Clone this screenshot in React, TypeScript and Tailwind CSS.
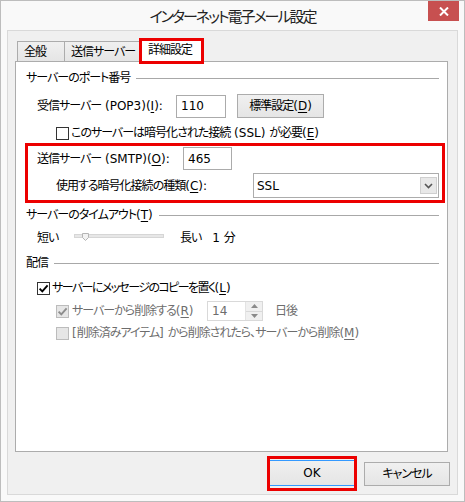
import React from "react";

const CJK = /([\u3000-\u30ff\u3400-\u9fff\uff00-\uffef]+)/;

function J({ children, tight }: { children: string; tight?: boolean }) {
  const parts = children.split(CJK);
  return (
    <>
      {parts.map((p, i) =>
        p && CJK.test(p) ? (
          <span key={i} className={tight ? "tracking-[-1.6px]" : "tracking-[-1px]"}>
            {p}
          </span>
        ) : (
          <React.Fragment key={i}>{p}</React.Fragment>
        )
      )}
    </>
  );
}

function Check({ checked, disabled }: { checked?: boolean; disabled?: boolean }) {
  return (
    <div
      className={
        disabled
          ? "w-[13px] h-[13px] border border-[#bcbcbc] bg-[#e6e6e6] flex items-center justify-center shrink-0"
          : "w-[13px] h-[13px] border border-[#333333] bg-white flex items-center justify-center shrink-0"
      }
    >
      {checked && (
        <svg width="11" height="11" viewBox="0 0 11 11">
          <path
            d="M1.6 5.6 L4.3 8.3 L9.6 2.4"
            fill="none"
            stroke={disabled ? "#8d8d8d" : "#000000"}
            strokeWidth="1.9"
          />
        </svg>
      )}
    </div>
  );
}

function Group({ children }: { children: React.ReactNode }) {
  return (
    <div className="flex items-center h-[16px]">
      <span className="whitespace-nowrap">{children}</span>
      <div className="flex-1 h-px bg-[#a8a8a8] ml-[6px]" />
    </div>
  );
}

function U({ children }: { children: string }) {
  return <u className="underline-offset-2">{children}</u>;
}

export default function App() {
  return (
    <div className="w-[465px] h-[502px] bg-[#f9f9f9] border border-[#bdbdbd] flex flex-col text-[12px] leading-[16px] text-black font-['DejaVu_Sans','Noto_Sans_CJK_JP',sans-serif] [font-feature-settings:'palt']">
      {/* title bar */}
      <div className="h-[29px] grid grid-cols-[1fr_auto_1fr] items-start">
        <div />
        <div className="text-[15px] leading-[20px] mt-[6px] text-[#222222] whitespace-nowrap tracking-[-2px]">
          インターネット電子メール設定
        </div>
        <div className="flex justify-end pr-[5px]">
          <div className="w-[31px] h-[20px] bg-[#c75050] flex items-center justify-center">
            <svg width="10" height="9" viewBox="0 0 10 9">
              <path d="M1 0.5 L9 8.5 M9 0.5 L1 8.5" stroke="#ffffff" strokeWidth="2" fill="none" />
            </svg>
          </div>
        </div>
      </div>

      {/* client */}
      <div className="mx-[6px] mb-[6px] flex-1 border border-[#d9d9d9] bg-[#f0f0f0] flex flex-col pl-[7px] pt-[8px]">
        {/* tabs */}
        <div className="flex items-end ml-[2px] h-[22px]">
          <div className="w-[48px] h-[20px] border-l border-t border-r border-[#acacac] bg-linear-to-b from-[#f0f0f0] to-[#e5e5e5] pl-[6px] flex items-center">
            <J>全般</J>
          </div>
          <div className="w-[75px] h-[20px] border-t border-r border-[#acacac] bg-linear-to-b from-[#f0f0f0] to-[#e5e5e5] pl-[6px] flex items-center whitespace-nowrap">
            <J>送信サーバー</J>
          </div>
          <div className="relative z-10 -ml-[1px] -mb-[3px] w-[65px] h-[26px] border-[3px] border-[#ec0000] bg-white pl-[6px] pb-[3px] flex items-center whitespace-nowrap">
            <J>詳細設定</J>
          </div>
        </div>

        {/* panel */}
        <div className="mr-[9px] h-[391px] border border-[#acacac] bg-white pl-[10px] pr-[8px] pt-[8px] flex flex-col">
          <Group>
            <J>サーバーのポート番号</J>
          </Group>

          <div className="mt-[8px] h-[24px] flex items-center pl-[11px]">
            <div className="w-[139px] whitespace-nowrap">
              <J>受信サーバー (POP3)(</J>
              <U>I</U>):
            </div>
            <div className="w-[50px] h-[23px] border border-[#ababab] bg-white pl-[4px] flex items-center">110</div>
            <div className="ml-[11px] w-[87px] h-[24px] border border-[#acacac] bg-linear-to-b from-[#f0f0f0] to-[#e5e5e5] flex items-center justify-center whitespace-nowrap">
              <J>標準設定(</J>
              <U>D</U>)
            </div>
          </div>

          <div className="mt-[7px] h-[16px] flex items-center pl-[30px]">
            <Check />
            <span className="ml-[2px] whitespace-nowrap">
              <J>このサーバーは暗号化された接続 (SSL) が必要(</J>
              <U>E</U>)
            </span>
          </div>

          <div className="mt-[2px] -ml-[1px] w-[420px] h-[60px] border-[3px] border-[#ec0000] flex flex-col">
            <div className="mt-[1px] h-[23px] flex items-center pl-[9px]">
              <div className="w-[146px] whitespace-nowrap">
                <J>送信サーバー (SMTP)(</J>
                <U>O</U>):
              </div>
              <div className="w-[49px] h-[23px] border border-[#ababab] bg-white pl-[4px] flex items-center">465</div>
            </div>
            <div className="mt-[3px] h-[25px] flex items-center pl-[28px]">
              <div className="w-[197px] whitespace-nowrap">
                <J>使用する暗号化接続の種類(</J>
                <U>C</U>):
              </div>
              <div className="w-[186px] h-[25px] border border-[#acacac] bg-white pl-[3px] flex items-center justify-between">
                <span>SSL</span>
                <div className="w-[17px] h-[17px] mr-[1px] border border-[#cfcfcf] bg-[#e8e8e8] flex items-center justify-center">
                  <svg width="9" height="6" viewBox="0 0 9 6">
                    <path d="M1 1 L4.5 4.5 L8 1" fill="none" stroke="#555555" strokeWidth="1.6" />
                  </svg>
                </div>
              </div>
            </div>
          </div>

          <div className="mt-[4px]">
            <Group>
              <J>サーバーのタイムアウト(</J>
              <U>T</U>)
            </Group>
          </div>

          <div className="mt-[7px] h-[16px] flex items-center pl-[11px]">
            <div className="w-[37px] whitespace-nowrap">
              <J>短い</J>
            </div>
            <div className="h-[16px] pt-[4px]">
              <div className="relative w-[90px] h-[4px] border border-[#d6d6d6] bg-[#e7e7e7]">
                <svg className="absolute left-[7px] -top-[2px]" width="7" height="8" viewBox="0 0 7 8">
                  <path d="M0.5 0.5 H6.5 V4.5 L3.5 7.5 L0.5 4.5 Z" fill="#f2f2f2" stroke="#b5b5b5" />
                </svg>
              </div>
            </div>
            <div className="ml-[16px] whitespace-nowrap">
              <J>長い</J>
            </div>
            <div className="ml-[11px] whitespace-nowrap">
              1 <J>分</J>
            </div>
          </div>

          <div className="mt-[9px]">
            <Group>
              <J>配信</J>
            </Group>
          </div>

          <div className="mt-[9px] h-[16px] flex items-center pl-[11px]">
            <Check checked />
            <span className="ml-[2px] whitespace-nowrap">
              <J tight>サーバーにメッセージのコピーを置く(</J>
              <U>L</U>)
            </span>
          </div>

          <div className="mt-[5px] h-[20px] flex items-center pl-[30px] text-[#6d6d6d]">
            <Check checked disabled />
            <div className="ml-[3px] w-[135px] whitespace-nowrap">
              <J>サーバーから削除する(</J>
              <U>R</U>)
            </div>
            <div className="w-[56px] h-[20px] border border-[#d9d9d9] bg-white flex items-center justify-between">
              <span className="pl-[4px] text-[#6d6d6d]">14</span>
              <div className="w-[17px] h-[18px] border-l border-[#e3e3e3] flex flex-col">
                <div className="flex-1 bg-[#f0f0f0] border-b border-[#d9d9d9] flex items-center justify-center">
                  <svg width="7" height="4" viewBox="0 0 7 4">
                    <path d="M0 4 L3.5 0 L7 4 Z" fill="#8a8a8a" />
                  </svg>
                </div>
                <div className="flex-1 bg-[#f0f0f0] flex items-center justify-center">
                  <svg width="7" height="4" viewBox="0 0 7 4">
                    <path d="M0 0 L3.5 4 L7 0 Z" fill="#8a8a8a" />
                  </svg>
                </div>
              </div>
            </div>
            <div className="ml-[12px] whitespace-nowrap">
              <J>日後</J>
            </div>
          </div>

          <div className="mt-[4px] h-[16px] flex items-center pl-[30px] text-[#6d6d6d]">
            <Check disabled />
            <span className="ml-[3px] whitespace-nowrap">
              <J>[削除済みアイテム] から削除されたら、サーバーから削除(</J>
              <U>M</U>)
            </span>
          </div>
        </div>

        {/* buttons */}
        <div className="mt-[4px] mr-[7px] flex justify-end items-center">
          <div className="w-[90px] h-[35px] border-[3px] border-[#ec0000] pt-[1px]">
            <div className="h-[26px] border-t border-b border-[#3399ff] bg-linear-to-b from-[#f0f0f0] to-[#e5e5e5] flex items-center justify-center">
              OK
            </div>
          </div>
          <div className="ml-[7px] w-[86px] h-[24px] border border-[#acacac] bg-linear-to-b from-[#f0f0f0] to-[#e5e5e5] flex items-center justify-center whitespace-nowrap">
            <J>キャンセル</J>
          </div>
        </div>
      </div>
    </div>
  );
}
